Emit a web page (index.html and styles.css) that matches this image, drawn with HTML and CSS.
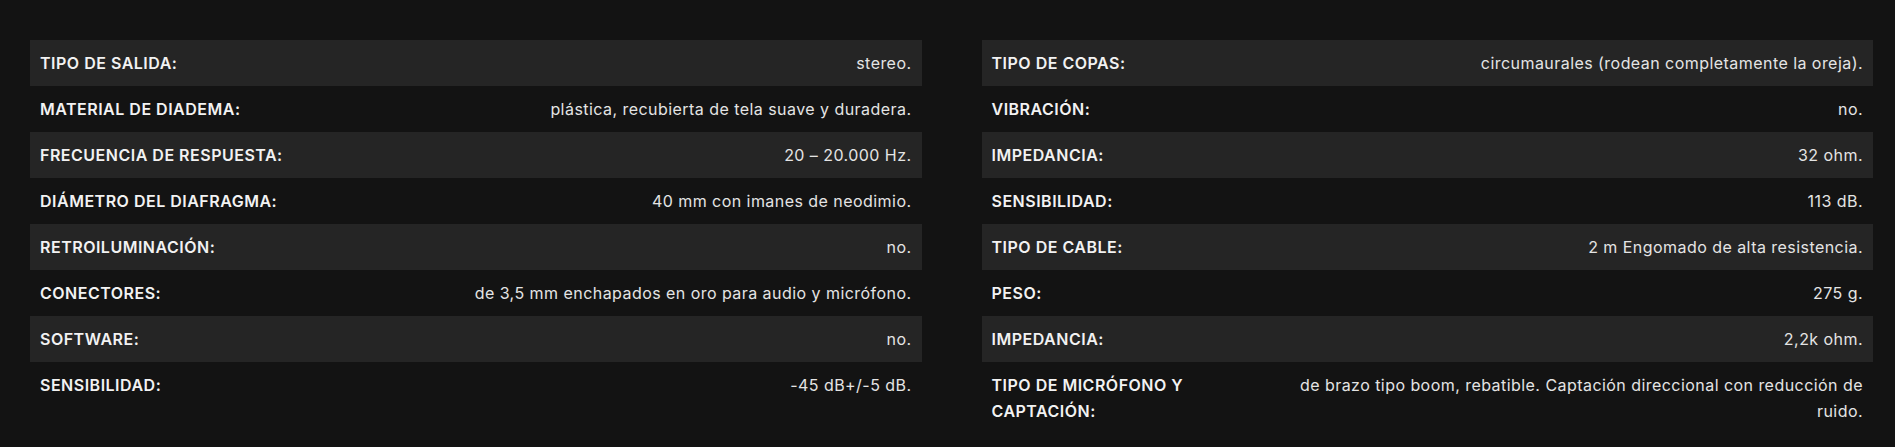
FILE: index.html
```html
<!DOCTYPE html>
<html lang="es">
<head>
<meta charset="utf-8">
<title>Especificaciones</title>
<link rel="stylesheet" href="styles.css">
</head>
<body>
<div class="specs">
  <div class="table">
    <div class="row"><div class="label">TIPO DE SALIDA:</div><div class="value">stereo.</div></div>
    <div class="row"><div class="label">MATERIAL DE DIADEMA:</div><div class="value">plástica, recubierta de tela suave y duradera.</div></div>
    <div class="row"><div class="label">FRECUENCIA DE RESPUESTA:</div><div class="value">20 – 20.000 Hz.</div></div>
    <div class="row"><div class="label">DIÁMETRO DEL DIAFRAGMA:</div><div class="value">40 mm con imanes de neodimio.</div></div>
    <div class="row"><div class="label">RETROILUMINACIÓN:</div><div class="value">no.</div></div>
    <div class="row"><div class="label">CONECTORES:</div><div class="value">de 3,5 mm enchapados en oro para audio y micrófono.</div></div>
    <div class="row"><div class="label">SOFTWARE:</div><div class="value">no.</div></div>
    <div class="row"><div class="label">SENSIBILIDAD:</div><div class="value">-45 dB+/-5 dB.</div></div>
  </div>
  <div class="table">
    <div class="row"><div class="label">TIPO DE COPAS:</div><div class="value">circumaurales (rodean completamente la oreja).</div></div>
    <div class="row"><div class="label">VIBRACIÓN:</div><div class="value">no.</div></div>
    <div class="row"><div class="label">IMPEDANCIA:</div><div class="value">32 ohm.</div></div>
    <div class="row"><div class="label">SENSIBILIDAD:</div><div class="value">113 dB.</div></div>
    <div class="row"><div class="label">TIPO DE CABLE:</div><div class="value">2 m Engomado de alta resistencia.</div></div>
    <div class="row"><div class="label">PESO:</div><div class="value">275 g.</div></div>
    <div class="row"><div class="label">IMPEDANCIA:</div><div class="value">2,2k ohm.</div></div>
    <div class="row"><div class="label">TIPO DE MICRÓFONO Y CAPTACIÓN:</div><div class="value">de brazo tipo boom, rebatible. Captación direccional con reducción de ruido.</div></div>
  </div>
</div>
</body>
</html>
```
FILE: styles.css
```css
html, body {
  margin: 0;
  background: #131313;
}
body {
  font-family: Inter, "DejaVu Sans", sans-serif;
  font-size: 16px;
  color: #ececec;
  padding: 40px 22px 14px 30px;
}
.specs {
  display: grid;
  grid-template-columns: 1fr 1fr;
  column-gap: 60px;
}
.table {
  display: flex;
  flex-direction: column;
}
.row {
  display: flex;
  justify-content: space-between;
  gap: 10px;
  padding: 10px 10px;
  line-height: 26px;
}
.row:nth-child(odd) {
  background: #252525;
}
.label {
  flex: 0 0 32%;
  font-weight: 600;
  letter-spacing: 0.5px;
  color: #f2f2f2;
}
.value {
  flex: 1 1 auto;
  text-align: right;
  font-weight: 400;
  letter-spacing: 0.45px;
  color: #e4e4e4;
}
```
